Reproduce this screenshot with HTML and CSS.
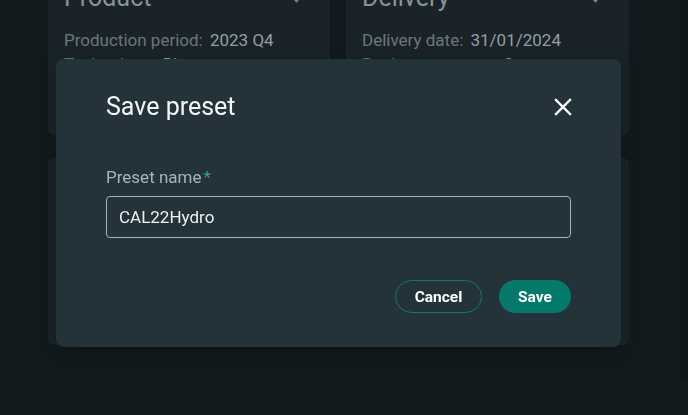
FILE: index.html
```html
<!DOCTYPE html>
<html lang="en">
<head>
<meta charset="UTF-8" />
<meta name="viewport" content="width=device-width, initial-scale=1" />
<title>Save preset</title>
<link rel="stylesheet" href="styles.css">
</head>
<body>

<main class="page">
  <div class="cards">
    <section class="card card-top">
      <div class="card-head">
        <h3>Product</h3>
        <span class="chev"></span>
      </div>
      <div class="row"><span class="key">Production period:</span> <span class="val">2023 Q4</span></div>
      <div class="row"><span class="key">Technology:</span> <span class="val">Biomass</span></div>
    </section>
    <section class="card card-top">
      <div class="card-head">
        <h3>Delivery</h3>
        <span class="chev"></span>
      </div>
      <div class="row"><span class="key">Delivery date:</span> <span class="val">31/01/2024</span></div>
      <div class="row"><span class="key">Registry operator:</span> <span class="val">Ocean</span></div>
    </section>
    <section class="card card-low"></section>
    <section class="card card-low"></section>
  </div>
  <div class="scrollbar"></div>
</main>

<!-- Modal -->
<div class="overlay">
  <div class="modal" role="dialog" aria-modal="true" aria-labelledby="modalTitle">
    <div class="modal-head">
      <h2 id="modalTitle">Save preset</h2>
      <button class="close" aria-label="Close">
        <svg width="18" height="18" viewBox="0 0 18 18"><path d="M2 2 L16 16 M16 2 L2 16" stroke="#fff" stroke-width="2.4" stroke-linecap="square" fill="none"/></svg>
      </button>
    </div>
    <label class="field-label" for="presetName">Preset name<span class="req">*</span></label>
    <input class="field" id="presetName" type="text" value="CAL22Hydro">
    <div class="actions">
      <button class="btn btn-outline">Cancel</button>
      <button class="btn btn-fill">Save</button>
    </div>
  </div>
</div>

</body>
</html>
```

FILE: styles.css
```css
* {
  box-sizing: border-box;
}
body {
  margin: 0;
  font-family: Roboto, "Noto Sans", sans-serif;
  background: #121a1d;
  color: #fff;
  height: 415px;
  overflow: hidden;
}

/* Page behind the dialog (dimmed, scrolled down a bit) */
.page {
  position: relative;
  height: 415px;
}
.cards {
  display: grid;
  grid-template-columns: 282px 283px;
  column-gap: 16px;
  row-gap: 23px;
  padding-left: 48px;
  margin-top: -34px;
}
.card {
  background: #1a2428;
  border-radius: 6px;
  padding: 16px 16px;
}
.card-top {
  height: 169px;
}
.card-low {
  height: 187px;
}
.card-head {
  display: flex;
  justify-content: space-between;
  align-items: flex-start;
  height: 46px;
}
.card-head h3 {
  margin: 0;
  font-size: 25px;
  font-weight: 400;
  line-height: 32px;
  color: #8a9497;
}
.chev {
  width: 7px;
  height: 7px;
  margin: 12px 14px 0 0;
  border-right: 2px solid #7c8689;
  border-bottom: 2px solid #7c8689;
  transform: rotate(45deg);
}
.row {
  font-size: 17px;
  line-height: 24px;
  color: #6c777b;
}
.row .key {
  margin-right: 3px;
}
.row .val {
  color: #949ea1;
}
.scrollbar {
  position: absolute;
  top: 0;
  right: 0;
  width: 8px;
  height: 100%;
  background: #0f1618;
}

/* Dialog */
.overlay {
  position: fixed;
  top: 0;
  left: 0;
  right: 11px;
  bottom: 0;
  display: flex;
  justify-content: center;
  align-items: flex-start;
  padding-top: 59px;
}
.modal {
  width: 565px;
  background: #24323a;
  border-radius: 8px;
  padding: 32px 50px 34px;
  box-shadow: 0 4px 20px rgba(0,0,0,0.25);
}
.modal-head {
  display: flex;
  justify-content: space-between;
  align-items: center;
  height: 32px;
  margin-bottom: 42px;
}
.modal-head h2 {
  margin: 0;
  font-size: 25px;
  font-weight: 400;
  line-height: 32px;
  color: #f4f6f6;
}
.close {
  background: none;
  border: none;
  padding: 0;
  margin-right: -1px;
  width: 18px;
  height: 18px;
  cursor: pointer;
}
.close svg {
  display: block;
}
.field-label {
  display: block;
  font-size: 17px;
  line-height: 24px;
  color: #aab4b7;
  margin-bottom: 7px;
}
.req {
  color: #2fa593;
  margin-left: 2px;
}
.field {
  display: block;
  width: 100%;
  height: 42px;
  padding: 0 12px;
  font-family: inherit;
  font-size: 17px;
  color: #eef1f1;
  background: transparent;
  border: 1px solid #a9b3b6;
  border-radius: 4px;
  outline: none;
}
.actions {
  display: flex;
  justify-content: flex-end;
  gap: 17px;
  margin-top: 42px;
}
.btn {
  height: 33px;
  border-radius: 17px;
  font-family: inherit;
  font-size: 15.5px;
  font-weight: 700;
  color: #fff;
  cursor: pointer;
}
.btn-outline {
  width: 87px;
  background: transparent;
  border: 1px solid #0d7a6c;
}
.btn-fill {
  width: 72px;
  background: #05796b;
  border: none;
}
```
